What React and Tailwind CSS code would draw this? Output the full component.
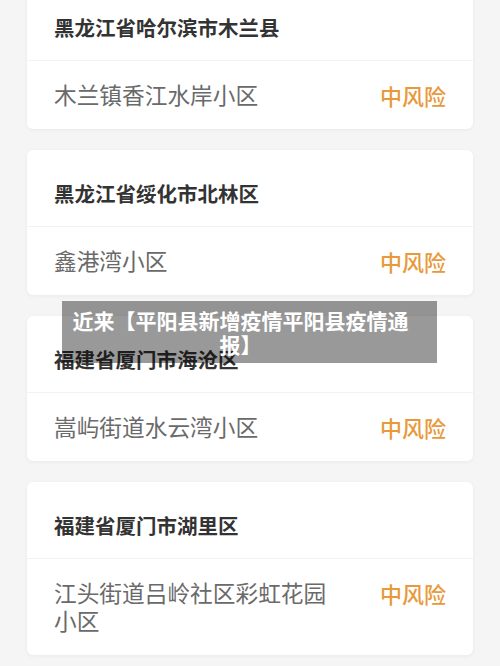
import React from "react";

const data = [
  { title: "黑龙江省哈尔滨市木兰县", place: "木兰镇香江水岸小区" },
  { title: "黑龙江省绥化市北林区", place: "鑫港湾小区" },
  { title: "福建省厦门市海沧区", place: "嵩屿街道水云湾小区" },
  { title: "福建省厦门市湖里区", place: "江头街道吕岭社区彩虹花园小区" },
];

function Card({ title, place }) {
  return (
    <div className="bg-white rounded-[6px] shadow-[0_1px_4px_rgba(0,0,0,0.05)]">
      <div className="h-[76px] flex items-center pt-[10px] px-[27px] text-[20.5px] font-bold text-[#333333]">
        {title}
      </div>
      <div className="border-t border-[#f2f2f2] px-[27px] py-[20px] flex justify-between items-start">
        <div className="w-[285px] text-[22.7px] leading-[28px] text-[#6a6a6a]">{place}</div>
        <div className="text-[22px] leading-[28px] font-medium text-[#e8993a]">中风险</div>
      </div>
    </div>
  );
}

export default function App() {
  return (
    <div
      className="relative w-[500px] h-[666px] overflow-hidden bg-[#f5f5f5]"
      style={{ fontFamily: '"Noto Sans CJK SC", "Noto Sans", sans-serif' }}
    >
      <div className="-mt-[16px] px-[27px] flex flex-col gap-[21px]">
        {data.map((d) => (
          <Card key={d.title} {...d} />
        ))}
      </div>
      <div className="absolute left-[62px] top-[301px] w-[375px] h-[62px] bg-black/40 pl-[8px] pr-[26px] py-[7px] text-center text-white font-bold text-[21px] leading-[24px]">
        近来【平阳县新增疫情平阳县疫情通报】
      </div>
    </div>
  );
}
